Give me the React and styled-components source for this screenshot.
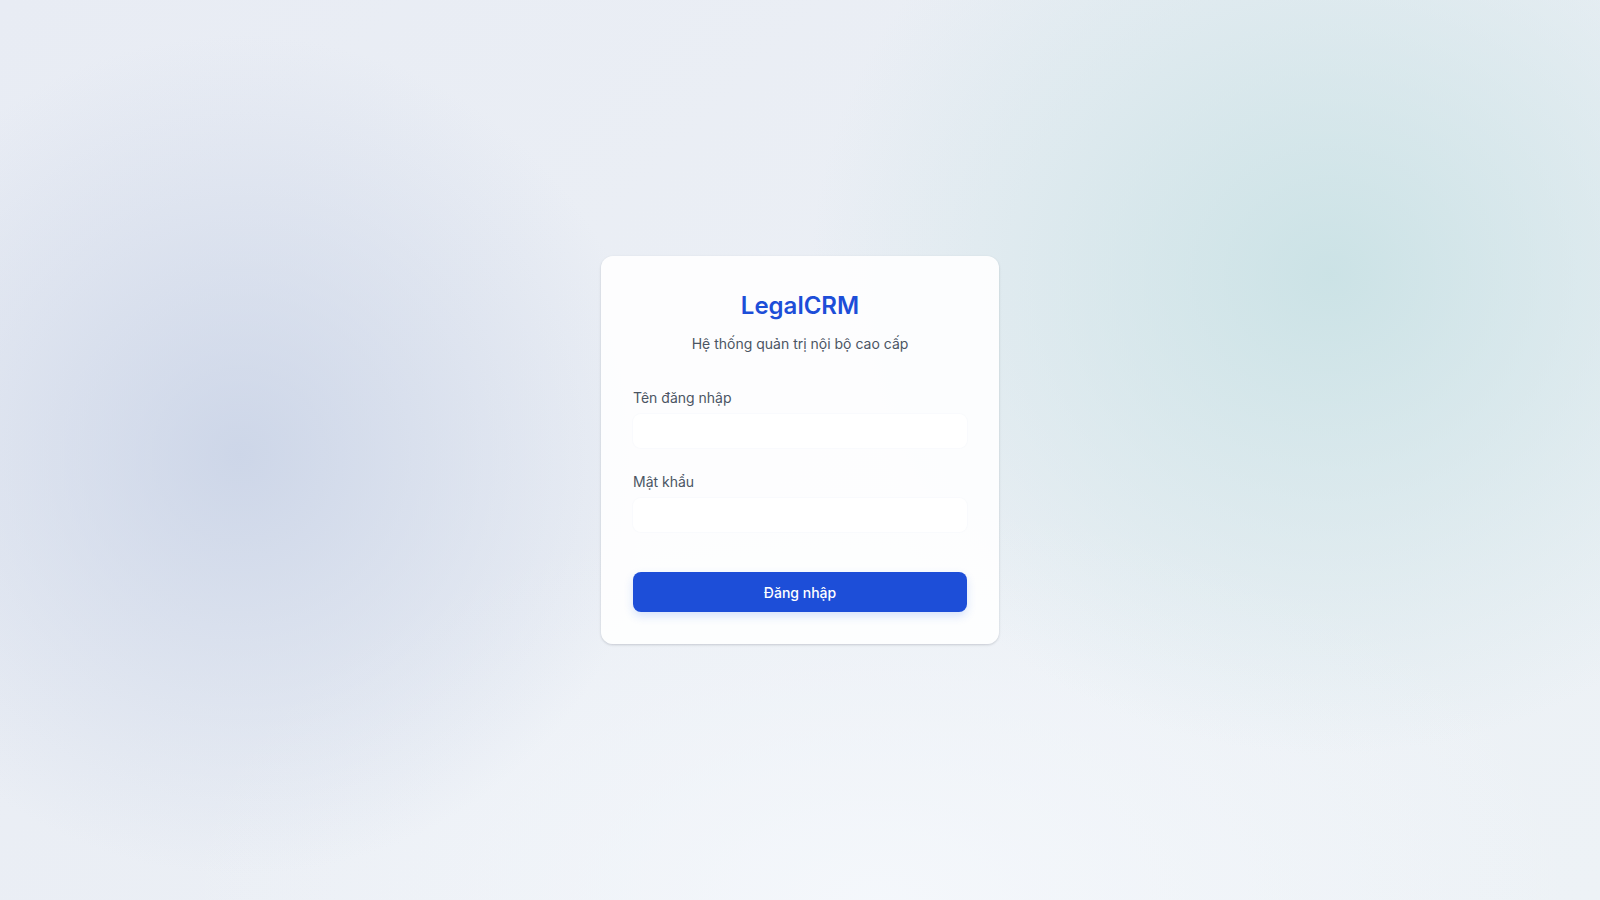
import React from "react";
import styled, { createGlobalStyle } from "styled-components";

const GlobalStyle = createGlobalStyle`
  * { box-sizing: border-box; }
  html, body { margin: 0; padding: 0; height: 100%; }
  body {
    font-family: Inter, "Noto Sans", "Liberation Sans", sans-serif;
    -webkit-font-smoothing: antialiased;
  }
  #root { height: 100%; }
`;

const Page = styled.main`
  min-height: 100vh;
  display: flex;
  align-items: center;
  justify-content: center;
  background:
    radial-gradient(ellipse 420px 420px at 240px 455px, rgba(200, 210, 230, 0.85), rgba(200, 210, 230, 0) 100%),
    radial-gradient(ellipse 520px 480px at 1330px 275px, rgba(200, 225, 228, 0.9), rgba(200, 225, 228, 0) 100%),
    radial-gradient(ellipse 700px 400px at 880px 900px, rgba(245, 248, 252, 0.9), rgba(245, 248, 252, 0) 100%),
    linear-gradient(135deg, #e8ecf4 0%, #ebeff5 50%, #edf2f6 100%);
`;

const Card = styled.section`
  width: 398px;
  padding: 32px;
  border-radius: 12px;
  background: rgba(255, 255, 255, 0.88);
  box-shadow: 0 1px 3px rgba(15, 23, 42, 0.12), 0 1px 2px rgba(15, 23, 42, 0.06);
`;

const Header = styled.header`
  text-align: center;
`;

const Title = styled.h1`
  margin: 0;
  font-size: 24px;
  line-height: 36px;
  font-weight: 600;
  color: #1d4ed8;
`;

const Subtitle = styled.p`
  margin: 10px 0 0;
  font-size: 14px;
  line-height: 20px;
  color: #4b5563;
`;

const Form = styled.form`
  margin-top: 34px;
  display: flex;
  flex-direction: column;
  gap: 24px;
`;

const Field = styled.div`
  display: flex;
  flex-direction: column;
  gap: 6px;
`;

const Label = styled.label`
  font-size: 14px;
  line-height: 20px;
  color: #4b5563;
`;

const Input = styled.input`
  height: 34px;
  padding: 0 12px;
  border: none;
  border-radius: 8px;
  background: #ffffff;
  box-shadow: 0 0 0 1px rgba(245, 247, 251, 0.5);
  font: inherit;
  font-size: 14px;
  color: #111827;
  outline: none;
`;

const Button = styled.button`
  margin-top: 16px;
  height: 40px;
  border: none;
  border-radius: 8px;
  background: #1d4ed8;
  color: #ffffff;
  font: inherit;
  font-size: 14px;
  font-weight: 500;
  cursor: pointer;
  box-shadow: 0 4px 10px rgba(37, 99, 235, 0.18);
`;

export default function App() {
  return (
    <>
      <GlobalStyle />
      <Page>
        <Card>
          <Header>
            <Title>LegalCRM</Title>
            <Subtitle>Hệ thống quản trị nội bộ cao cấp</Subtitle>
          </Header>
          <Form onSubmit={(e) => e.preventDefault()}>
            <Field>
              <Label htmlFor="username">Tên đăng nhập</Label>
              <Input id="username" type="text" />
            </Field>
            <Field>
              <Label htmlFor="password">Mật khẩu</Label>
              <Input id="password" type="password" />
            </Field>
            <Button type="submit">Đăng nhập</Button>
          </Form>
        </Card>
      </Page>
    </>
  );
}
